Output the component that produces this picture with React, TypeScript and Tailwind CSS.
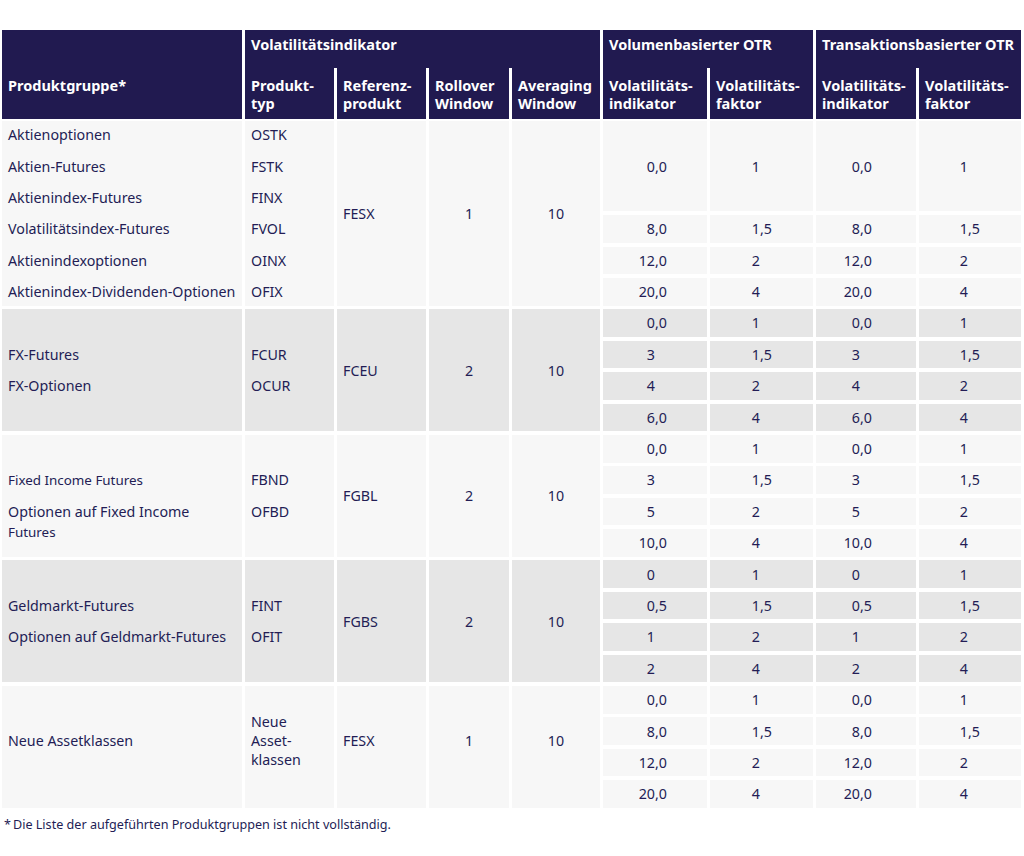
import React from "react";

const HBG = "bg-[#211a50]";
const LIGHT = "bg-[#f7f7f7]";
const GRAY = "bg-[#e6e6e6]";
const COLS =
  "grid grid-cols-[240px_89px_89px_80px_88px_104px_103px_100px_102px] gap-x-[3px]";

const ROW = ["row-start-1", "row-start-2", "row-start-3", "row-start-4", "row-start-5", "row-start-6"];
const VCOL = ["col-start-6", "col-start-7", "col-start-8", "col-start-9"];
const VW = ["w-[52px]", "w-[50px]", "w-[44px]", "w-[49px]"];

function Num({ v, w }: { v: string; w: string }) {
  const parts = v.split(",");
  return (
    <div className="flex h-full items-center">
      <span className={`${w} shrink-0 text-right`}>{parts[0]}</span>
      {parts.length > 1 && <span>,{parts[1]}</span>}
    </div>
  );
}

type ValRow = { row: number; span3?: boolean; v: string[] };

type GroupProps = {
  bg: string;
  six?: boolean;
  left: React.ReactNode;
  code: React.ReactNode;
  refp: string;
  roll: string;
  avg: string;
  values: ValRow[];
  shift?: boolean;
};

function Group({ bg, six, left, code, refp, roll, avg, values, shift }: GroupProps) {
  const rows = six ? "grid-rows-[repeat(6,27.6px)]" : "grid-rows-[repeat(4,27.6px)]";
  const pb = shift ? "pb-3" : "";
  return (
    <div className={`${COLS} ${rows} gap-y-[3.8px]`}>
      <div className={`col-start-1 row-start-1 row-span-full ${bg}`} />
      <div className={`col-start-2 row-start-1 row-span-full ${bg}`} />
      {left}
      {code}
      <div className={`col-start-3 row-start-1 row-span-full ${bg} flex items-center px-1.5 ${pb}`}>{refp}</div>
      <div className={`col-start-4 row-start-1 row-span-full ${bg} flex items-center justify-center ${pb}`}>{roll}</div>
      <div className={`col-start-5 row-start-1 row-span-full ${bg} flex items-center justify-center ${pb}`}>{avg}</div>
      {values.map((r) =>
        r.v.map((v, i) => (
          <div
            key={`${r.row}-${i}`}
            className={`${VCOL[i]} ${ROW[r.row]} ${r.span3 ? "row-span-3" : ""} ${bg}`}
          >
            <Num v={v} w={VW[i]} />
          </div>
        ))
      )}
    </div>
  );
}

function Cell({ col, row, text }: { col: 1 | 2; row: number; text: string }) {
  const c = col === 1 ? "col-start-1" : "col-start-2";
  return <div className={`${c} ${ROW[row]} flex items-center px-1.5 whitespace-nowrap`}>{text}</div>;
}

export default function App() {
  return (
    <div className="min-h-[856px] w-[1024px] bg-white pl-[2px] pt-[30px] font-['Noto_Sans',sans-serif] text-[14.25px] text-[#231d55]">
      {/* Header */}
      <div className={`${COLS} grid-rows-[38px_51px] text-[14.5px] font-bold text-white leading-[18px]`}>
        <div className={`col-start-1 row-start-1 row-span-2 ${HBG} px-1.5 pt-[46px]`}>Produktgruppe*</div>
        <div className={`col-start-2 col-span-4 row-start-1 ${HBG} px-1.5 pt-[5px]`}>Volatilitätsindikator</div>
        <div className={`col-start-6 col-span-2 row-start-1 ${HBG} px-1.5 pt-[5px]`}>Volumenbasierter OTR</div>
        <div className={`col-start-8 col-span-2 row-start-1 ${HBG} px-1.5 pt-[5px] whitespace-nowrap`}>Transaktionsbasierter OTR</div>
        <div className={`col-start-2 row-start-2 ${HBG} px-1.5 pt-2`}>Produkt-<br />typ</div>
        <div className={`col-start-3 row-start-2 ${HBG} px-1.5 pt-2`}>Referenz-<br />produkt</div>
        <div className={`col-start-4 row-start-2 ${HBG} px-1.5 pt-2`}>Rollover<br />Window</div>
        <div className={`col-start-5 row-start-2 ${HBG} px-1.5 pt-2 whitespace-nowrap`}>Averaging<br />Window</div>
        <div className={`col-start-6 row-start-2 ${HBG} px-1.5 pt-2`}>Volatilitäts-<br />indikator</div>
        <div className={`col-start-7 row-start-2 ${HBG} px-1.5 pt-2`}>Volatilitäts-<br />faktor</div>
        <div className={`col-start-8 row-start-2 ${HBG} px-1.5 pt-2`}>Volatilitäts-<br />indikator</div>
        <div className={`col-start-9 row-start-2 ${HBG} px-1.5 pt-2`}>Volatilitäts-<br />faktor</div>
      </div>

      {/* Body */}
      <div className="mt-[2px] flex flex-col gap-y-[3.8px]">
        <Group
          bg={LIGHT}
          six
          left={
            <>
              <Cell col={1} row={0} text="Aktienoptionen" />
              <Cell col={1} row={1} text="Aktien-Futures" />
              <Cell col={1} row={2} text="Aktienindex-Futures" />
              <Cell col={1} row={3} text="Volatilitätsindex-Futures" />
              <Cell col={1} row={4} text="Aktienindexoptionen" />
              <Cell col={1} row={5} text="Aktienindex-Dividenden-Optionen" />
            </>
          }
          code={
            <>
              <Cell col={2} row={0} text="OSTK" />
              <Cell col={2} row={1} text="FSTK" />
              <Cell col={2} row={2} text="FINX" />
              <Cell col={2} row={3} text="FVOL" />
              <Cell col={2} row={4} text="OINX" />
              <Cell col={2} row={5} text="OFIX" />
            </>
          }
          refp="FESX"
          roll="1"
          avg="10"
          values={[
            { row: 0, span3: true, v: ["0,0", "1", "0,0", "1"] },
            { row: 3, v: ["8,0", "1,5", "8,0", "1,5"] },
            { row: 4, v: ["12,0", "2", "12,0", "2"] },
            { row: 5, v: ["20,0", "4", "20,0", "4"] },
          ]}
        />
        <Group
          bg={GRAY}
          left={
            <>
              <Cell col={1} row={1} text="FX-Futures" />
              <Cell col={1} row={2} text="FX-Optionen" />
            </>
          }
          code={
            <>
              <Cell col={2} row={1} text="FCUR" />
              <Cell col={2} row={2} text="OCUR" />
            </>
          }
          refp="FCEU"
          roll="2"
          avg="10"
          values={[
            { row: 0, v: ["0,0", "1", "0,0", "1"] },
            { row: 1, v: ["3", "1,5", "3", "1,5"] },
            { row: 2, v: ["4", "2", "4", "2"] },
            { row: 3, v: ["6,0", "4", "6,0", "4"] },
          ]}
        />
        <Group
          bg={LIGHT}
          left={
            <>
              <div className="col-start-1 row-start-2 flex items-center px-1.5 text-[13.4px] whitespace-nowrap">
                Fixed Income Futures
              </div>
              <div className="col-start-1 row-start-3 row-span-2 px-1.5 pt-[3px] leading-[21px]">
                <div>Optionen auf Fixed Income</div>
                <div className="text-[13.4px]">Futures</div>
              </div>
            </>
          }
          code={
            <>
              <Cell col={2} row={1} text="FBND" />
              <Cell col={2} row={2} text="OFBD" />
            </>
          }
          refp="FGBL"
          roll="2"
          avg="10"
          values={[
            { row: 0, v: ["0,0", "1", "0,0", "1"] },
            { row: 1, v: ["3", "1,5", "3", "1,5"] },
            { row: 2, v: ["5", "2", "5", "2"] },
            { row: 3, v: ["10,0", "4", "10,0", "4"] },
          ]}
        />
        <Group
          bg={GRAY}
          left={
            <>
              <Cell col={1} row={1} text="Geldmarkt-Futures" />
              <Cell col={1} row={2} text="Optionen auf Geldmarkt-Futures" />
            </>
          }
          code={
            <>
              <Cell col={2} row={1} text="FINT" />
              <Cell col={2} row={2} text="OFIT" />
            </>
          }
          refp="FGBS"
          roll="2"
          avg="10"
          values={[
            { row: 0, v: ["0", "1", "0", "1"] },
            { row: 1, v: ["0,5", "1,5", "0,5", "1,5"] },
            { row: 2, v: ["1", "2", "1", "2"] },
            { row: 3, v: ["2", "4", "2", "4"] },
          ]}
        />
        <Group
          bg={LIGHT}
          shift
          left={
            <div className="col-start-1 row-start-1 row-span-4 flex items-center px-1.5 pb-3">Neue Assetklassen</div>
          }
          code={
            <div className="col-start-2 row-start-1 row-span-4 flex items-center px-1.5 pb-3 leading-[19px]">
              <div>
                Neue
                <br />
                Asset-
                <br />
                klassen
              </div>
            </div>
          }
          refp="FESX"
          roll="1"
          avg="10"
          values={[
            { row: 0, v: ["0,0", "1", "0,0", "1"] },
            { row: 1, v: ["8,0", "1,5", "8,0", "1,5"] },
            { row: 2, v: ["12,0", "2", "12,0", "2"] },
            { row: 3, v: ["20,0", "4", "20,0", "4"] },
          ]}
        />
      </div>

      <div className="mt-[8px] pl-[2px] text-[12.6px] leading-[18px]">
        <span className="mr-[2px]">*</span>Die Liste der aufgeführten Produktgruppen ist nicht vollständig.
      </div>
    </div>
  );
}
